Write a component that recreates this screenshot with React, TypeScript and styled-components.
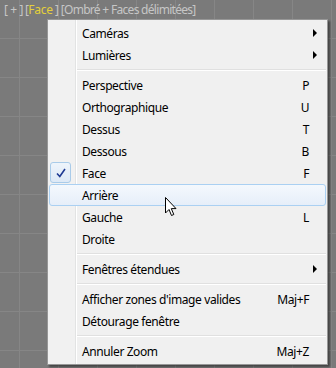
import React from 'react';
import styled, { createGlobalStyle } from 'styled-components';

const GlobalStyle = createGlobalStyle`
  html, body {
    margin: 0;
    padding: 0;
    background: #7a7a7a;
  }
`;

const Viewport = styled.div`
  position: relative;
  width: 336px;
  height: 368px;
  overflow: hidden;
  background-color: #7a7a7a;
  background-image:
    linear-gradient(to right, transparent 19px, #868686 19px, #868686 20px, transparent 20px),
    linear-gradient(to bottom, transparent 38px, #868686 38px, #868686 39px, transparent 39px);
  background-size: 39px 39px;
  display: flex;
  flex-direction: column;
  font-family: 'Noto Sans', 'Open Sans', sans-serif;
`;

const Label = styled.div`
  height: 19px;
  padding-left: 4px;
  box-sizing: border-box;
  font-size: 12px;
  line-height: 19px;
  color: #c6c6c6;
  white-space: pre;
  letter-spacing: -0.7px;
`;

const Plus = styled.span`
  margin: 0 3px;
`;

const Active = styled.span`
  color: #e4cf3a;
  letter-spacing: -0.3px;
`;

const Menu = styled.div`
  margin-left: 47px;
  width: 281px;
  box-sizing: border-box;
  border: 1px solid #979797;
  padding: 2px 0;
  background: linear-gradient(
    to right,
    #f1f1f1 0,
    #f1f1f1 27px,
    #e2e3e3 27px,
    #e2e3e3 28px,
    #ffffff 28px,
    #ffffff 29px,
    #f0f0f0 29px
  );
  box-shadow: 2px 2px 2px rgba(0, 0, 0, 0.45);
  display: flex;
  flex-direction: column;
  color: #000;
  font-size: 12px;
  letter-spacing: -0.4px;
`;

const Item = styled.div<{ $hover?: boolean }>`
  position: relative;
  height: 22px;
  margin: 0 1px;
  box-sizing: border-box;
  display: flex;
  align-items: center;
  padding-left: 32px;
  padding-right: 16px;
  border: 1px solid ${p => (p.$hover ? '#aad0f2' : 'transparent')};
  border-radius: 3px;
  background: ${p =>
    p.$hover ? 'linear-gradient(to bottom, #f4f8fd, #e6eef9)' : 'transparent'};
`;

const Text = styled.span`
  flex: 1;
  white-space: nowrap;
`;

const Shortcut = styled.span`
  white-space: nowrap;
`;

const Arrow = styled.span`
  position: absolute;
  right: 8px;
  top: 6px;
  width: 0;
  height: 0;
  border-top: 4px solid transparent;
  border-bottom: 4px solid transparent;
  border-left: 4px solid #000;
`;

const CheckBox = styled.span`
  position: absolute;
  left: 0;
  top: -1px;
  width: 21px;
  height: 21px;
  box-sizing: border-box;
  border: 1px solid #a9cbe9;
  border-radius: 3px;
  background: linear-gradient(to bottom, #eef4fb, #dde9f6);
  display: flex;
  align-items: center;
  justify-content: center;
`;

const Separator = styled.div`
  height: 8px;
  display: flex;
  flex-direction: column;
  justify-content: center;
  padding-left: 29px;
  padding-right: 1px;

  &::before {
    content: '';
    display: block;
    height: 1px;
    background: #e0e0e0;
  }
  &::after {
    content: '';
    display: block;
    height: 1px;
    background: #ffffff;
  }
`;

const Cursor = styled.svg`
  position: absolute;
  left: 165px;
  top: 197px;
`;

type Entry =
  | { kind: 'sep' }
  | { kind: 'item'; label: string; key?: string; sub?: boolean; checked?: boolean; hover?: boolean };

const entries: Entry[] = [
  { kind: 'item', label: 'Caméras', sub: true },
  { kind: 'item', label: 'Lumières', sub: true },
  { kind: 'sep' },
  { kind: 'item', label: 'Perspective', key: 'P' },
  { kind: 'item', label: 'Orthographique', key: 'U' },
  { kind: 'item', label: 'Dessus', key: 'T' },
  { kind: 'item', label: 'Dessous', key: 'B' },
  { kind: 'item', label: 'Face', key: 'F', checked: true },
  { kind: 'item', label: 'Arrière', hover: true },
  { kind: 'item', label: 'Gauche', key: 'L' },
  { kind: 'item', label: 'Droite' },
  { kind: 'sep' },
  { kind: 'item', label: 'Fenêtres étendues', sub: true },
  { kind: 'sep' },
  { kind: 'item', label: "Afficher zones d'image valides", key: 'Maj+F' },
  { kind: 'item', label: 'Détourage fenêtre' },
  { kind: 'sep' },
  { kind: 'item', label: 'Annuler Zoom', key: 'Maj+Z' },
];

const Check = () => (
  <svg width="10" height="10" viewBox="0 0 10 10">
    <path d="M1 5.5 L3.8 8.5 L9 1" fill="none" stroke="#1f3a93" strokeWidth="1.6" />
  </svg>
);

export default function App() {
  return (
    <Viewport>
      <GlobalStyle />
      <Label>
        [<Plus>+</Plus>] [<Active>Face</Active> ] [Ombré + Faces délimitées]
      </Label>
      <Menu>
        {entries.map((e, i) =>
          e.kind === 'sep' ? (
            <Separator key={i} />
          ) : (
            <Item key={i} $hover={e.hover}>
              {e.checked && (
                <CheckBox>
                  <Check />
                </CheckBox>
              )}
              <Text>{e.label}</Text>
              {e.key && <Shortcut>{e.key}</Shortcut>}
              {e.sub && <Arrow />}
            </Item>
          )
        )}
      </Menu>
      <Cursor width="13" height="20" viewBox="0 0 13 20">
        <path
          d="M0.5 0.5 L0.5 16 L4 12.5 L6.5 18.5 L8.8 17.5 L6.3 11.6 L11 11.6 Z"
          fill="#fff"
          stroke="#000"
          strokeWidth="1"
          strokeLinejoin="miter"
        />
      </Cursor>
    </Viewport>
  );
}
